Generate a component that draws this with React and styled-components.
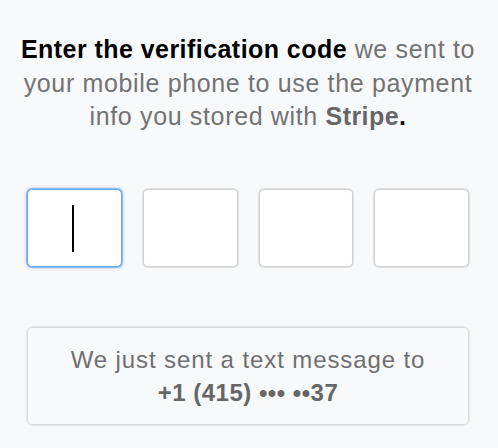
import React from "react";
import styled, { createGlobalStyle } from "styled-components";

const GlobalStyle = createGlobalStyle`
  html, body {
    margin: 0;
    padding: 0;
    background: #f8f9fb;
  }
  body {
    font-family: "Liberation Sans", Arial, sans-serif;
  }
`;

export default function App() {
  const digits = ["", "", "", ""];

  return (
    <Wrapper>
      <GlobalStyle />
      <Heading>
        <Strong>Enter the verification code</Strong> we sent to
        <br />
        your mobile phone to use the payment
        <br />
        info you stored with <Brand>Stripe</Brand>
        <Strong>.</Strong>
      </Heading>
      <CodeRow>
        {digits.map((digit, index) => (
          <CodeBox key={index} $active={index === 0}>
            {index === 0 && <Caret />}
          </CodeBox>
        ))}
      </CodeRow>
      <Notice>
        We just sent a text message to
        <br />
        <Phone>+1 (415) ••• ••37</Phone>
      </Notice>
    </Wrapper>
  );
}

const Wrapper = styled.div`
  width: 498px;
  height: 448px;
  box-sizing: border-box;
  padding: 33px 29px 0 27px;
  display: flex;
  flex-direction: column;
`;

const Heading = styled.p`
  margin: 0 -20px;
  height: 101px;
  text-align: center;
  font-size: 25px;
  line-height: 33.5px;
  color: #737373;
  letter-spacing: 0.65px;
  white-space: nowrap;
`;

const Strong = styled.span`
  font-weight: bold;
  color: #000;
  letter-spacing: 0.45px;
`;

const Brand = styled.span`
  font-weight: bold;
  color: #666;
  letter-spacing: 0.45px;
`;

const CodeRow = styled.div`
  margin-top: 55px;
  display: grid;
  grid-template-columns: repeat(4, 1fr);
  gap: 21px;
`;

const CodeBox = styled.div`
  height: 78px;
  box-sizing: border-box;
  background: #fff;
  border-radius: 5px;
  border: 1px solid ${(p) => (p.$active ? "#6ea6e8" : "#d3d3d3")};
  box-shadow: ${(p) =>
    p.$active ? "0 0 0 1px #8cbaf0, 0 0 3px 1px rgba(90,150,230,0.5)" : "0 0 0 1px #e0e0e0"};
  display: flex;
  align-items: center;
  justify-content: center;
`;

const Caret = styled.div`
  width: 2px;
  height: 47px;
  margin-right: 2px;
  background: #000;
`;

const Notice = styled.div`
  margin-top: 60px;
  height: 98px;
  box-sizing: border-box;
  border: 1px solid #dcdcdc;
  box-shadow: 0 0 0 1px #e8e8e8;
  border-radius: 5px;
  display: flex;
  flex-direction: column;
  justify-content: center;
  text-align: center;
  font-size: 24px;
  line-height: 33px;
  color: #6f6f6f;
  letter-spacing: 0.9px;
`;

const Phone = styled.span`
  font-weight: bold;
  color: #666;
  letter-spacing: 0.5px;
`;
